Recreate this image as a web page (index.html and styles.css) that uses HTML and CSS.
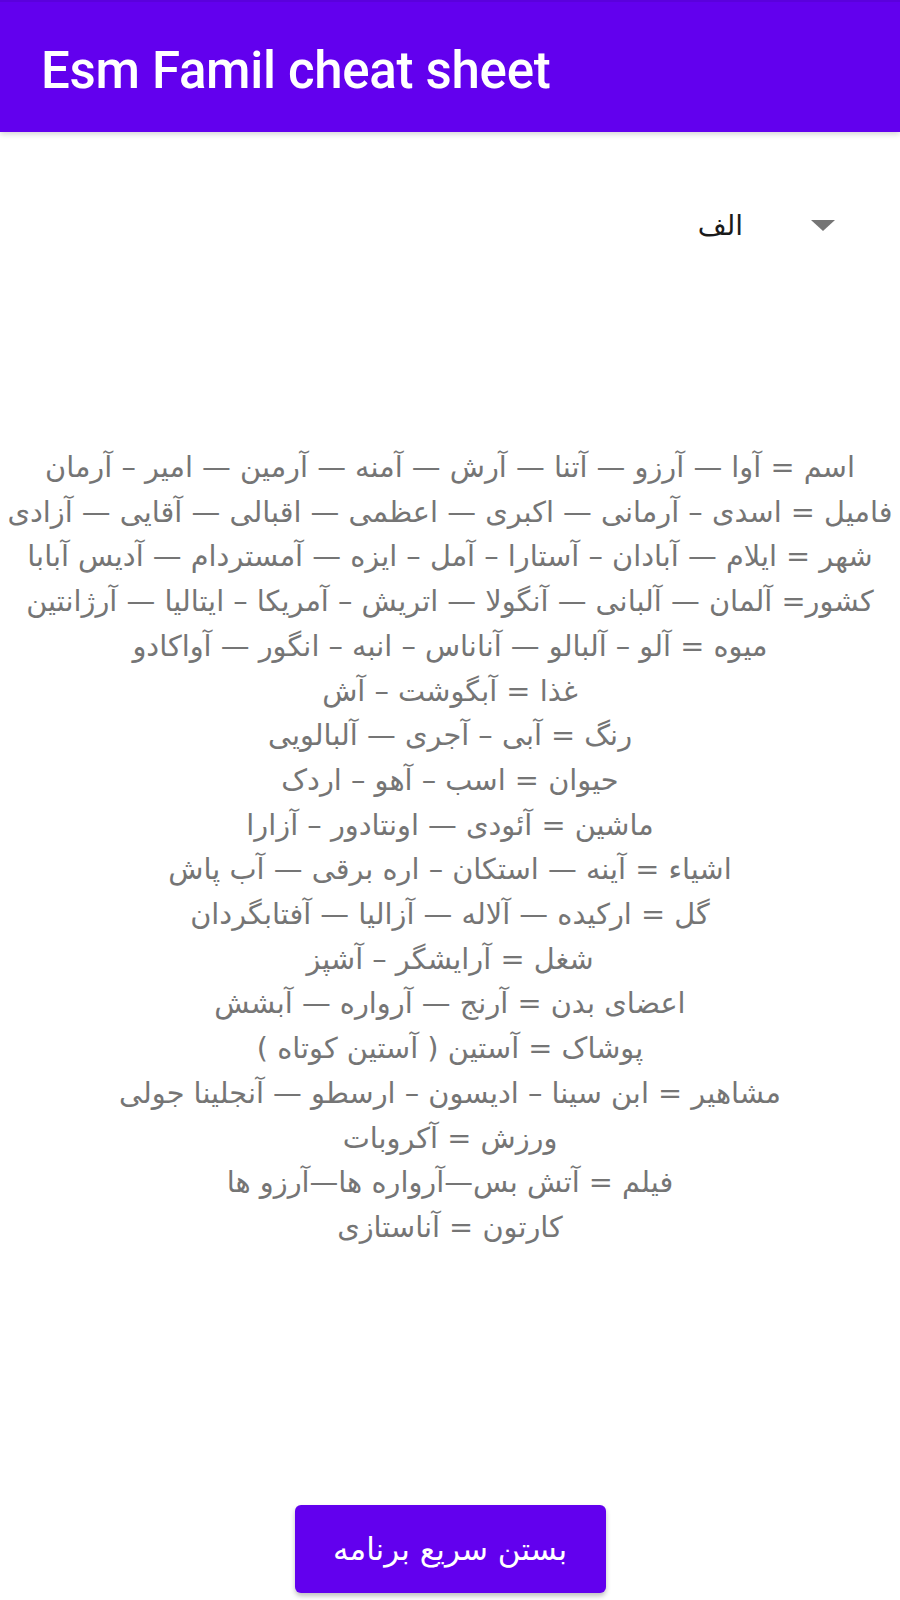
FILE: index.html
```html
<!DOCTYPE html>
<html lang="fa">
<head>
<meta charset="utf-8">
<title>Esm Famil cheat sheet</title>
<link rel="stylesheet" href="styles.css">
</head>
<body>
<div class="app">
  <header class="appbar"><h1 class="title">Esm Famil cheat sheet</h1></header>
  <main class="content">
    <div class="spinner" dir="rtl">
      <span class="spinner-arrow"></span>
      <span class="spinner-text">الف</span>
    </div>
    <div class="list" dir="rtl">
      <p>اسم = آوا — آرزو — آتنا — آرش — آمنه — آرمین — امیر – آرمان</p>
      <p>فامیل = اسدی – آرمانی — اکبری — اعظمی — اقبالی — آقایی — آزادی</p>
      <p>شهر = ایلام — آبادان – آستارا – آمل – ایزه — آمستردام — آدیس آبابا</p>
      <p>کشور= آلمان — آلبانی — آنگولا — اتریش – آمریکا – ایتالیا — آرژانتین</p>
      <p>میوه = آلو – آلبالو — آناناس – انبه – انگور — آواکادو</p>
      <p>غذا = آبگوشت – آش</p>
      <p>رنگ = آبی – آجری — آلبالویی</p>
      <p>حیوان = اسب – آهو – اردک</p>
      <p>ماشین = آئودی — اونتادور – آزارا</p>
      <p>اشیاء = آینه — استکان – اره برقی — آب پاش</p>
      <p>گل = ارکیده — آلاله — آزالیا — آفتابگردان</p>
      <p>شغل = آرایشگر – آشپز</p>
      <p>اعضای بدن = آرنج — آرواره — آبشش</p>
      <p>پوشاک = آستین ( آستین کوتاه )</p>
      <p>مشاهیر = ابن سینا – ادیسون – ارسطو — آنجلینا جولی</p>
      <p>ورزش = آکروبات</p>
      <p>فیلم = آتش بس—آرواره ها—آرزو ها</p>
      <p>کارتون = آناستازی</p>
    </div>
    <button class="close-btn" dir="rtl">بستن سریع برنامه</button>
  </main>
</div>
</body>
</html>
```
FILE: styles.css
```css
html, body {
  margin: 0;
  padding: 0;
  background: #ffffff;
}
.app {
  display: flex;
  flex-direction: column;
  height: 1600px;
  overflow: hidden;
}
.appbar {
  height: 132px;
  background: #6200ee;
  border-top: 2px solid #5a00dc;
  box-sizing: border-box;
  display: flex;
  align-items: center;
  padding-left: 41px;
  box-shadow: 0 2px 6px rgba(0, 0, 0, 0.18);
  position: relative;
  z-index: 1;
}
.title {
  margin: 0;
  color: #ffffff;
  font-family: Roboto, "Liberation Sans", sans-serif;
  font-weight: 500;
  font-size: 51px;
  letter-spacing: -0.3px;
  line-height: 1;
  padding-top: 6px;
}
.content {
  flex: 1;
  display: flex;
  flex-direction: column;
  align-items: center;
  padding-bottom: 7px;
}
.spinner {
  align-self: stretch;
  display: flex;
  align-items: center;
  height: 48px;
  margin-top: 69px;
  padding-right: 65px;
  gap: 68px;
}
.spinner-arrow {
  width: 0;
  height: 0;
  border-left: 12px solid transparent;
  border-right: 12px solid transparent;
  border-top: 11px solid #757575;
}
.spinner-text {
  font-family: "DejaVu Sans", sans-serif;
  font-size: 28px;
  color: #1a1a1a;
}
.list {
  margin-top: 196px;
  align-self: stretch;
  text-align: center;
  font-family: "DejaVu Sans", sans-serif;
  font-size: 28.8px;
  line-height: 44.7px;
  color: #757575;
}
.list p {
  margin: 0;
  white-space: nowrap;
}
.close-btn {
  margin-top: auto;
  width: 311px;
  height: 88px;
  background: #6200ee;
  color: #ffffff;
  border: none;
  border-radius: 6px;
  font-family: "DejaVu Sans", sans-serif;
  font-size: 31px;
  box-shadow: 0 3px 5px rgba(0, 0, 0, 0.25);
}
```
